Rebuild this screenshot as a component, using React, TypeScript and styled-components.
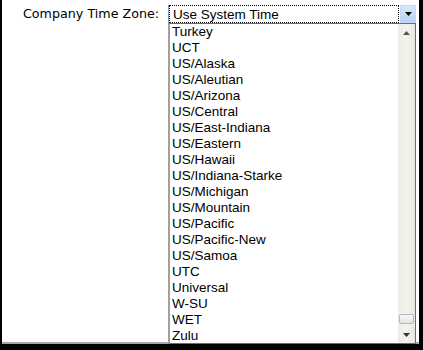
import React from "react";
import styled, { createGlobalStyle } from "styled-components";

const zones = [
  "Turkey",
  "UCT",
  "US/Alaska",
  "US/Aleutian",
  "US/Arizona",
  "US/Central",
  "US/East-Indiana",
  "US/Eastern",
  "US/Hawaii",
  "US/Indiana-Starke",
  "US/Michigan",
  "US/Mountain",
  "US/Pacific",
  "US/Pacific-New",
  "US/Samoa",
  "UTC",
  "Universal",
  "W-SU",
  "WET",
  "Zulu",
];

function App() {
  return (
    <>
      <GlobalStyle />
      <Frame>
        <Panel>
          <Label>Company Time Zone:</Label>
          <SelectColumn>
            <SelectBox>
              <SelectValue>Use System Time</SelectValue>
              <DropButton>
                <svg width="7" height="4" viewBox="0 0 7 4">
                  <path d="M0 0h7L3.5 4z" fill="#000" />
                </svg>
              </DropButton>
            </SelectBox>
            <List>
              <Options>
                {zones.map((z) => (
                  <Option key={z}>{z}</Option>
                ))}
              </Options>
              <ScrollBar>
                <ArrowButton>
                  <svg width="7" height="4" viewBox="0 0 7 4">
                    <path d="M0 4h7L3.5 0z" fill="#555" />
                  </svg>
                </ArrowButton>
                <Track>
                  <Thumb />
                </Track>
                <ArrowButton>
                  <svg width="7" height="4" viewBox="0 0 7 4">
                    <path d="M0 0h7L3.5 4z" fill="#333" />
                  </svg>
                </ArrowButton>
              </ScrollBar>
            </List>
          </SelectColumn>
        </Panel>
      </Frame>
    </>
  );
}

export default App;

const GlobalStyle = createGlobalStyle`
  html, body {
    margin: 0;
    padding: 0;
    background: #000;
  }
`;

const Frame = styled.div`
  width: 423px;
  height: 350px;
  box-sizing: border-box;
  background: #000;
  padding: 0 4px 6px 2px;
`;

const Panel = styled.div`
  height: 100%;
  box-sizing: border-box;
  background: #fff;
  border-bottom: 2px solid #a8a8a8;
  display: flex;
  align-items: flex-start;
  padding-top: 5px;
`;

const Label = styled.div`
  width: 166px;
  box-sizing: border-box;
  padding-left: 21px;
  font-family: "DejaVu Sans", Verdana, sans-serif;
  font-size: 12.7px;
  line-height: 18px;
  color: #000;
`;

const SelectColumn = styled.div`
  width: 248px;
  display: flex;
  flex-direction: column;
`;

const SelectBox = styled.div`
  height: 18px;
  display: flex;
  align-items: stretch;
  background: #fff;
  border-left: 1px solid #7f9db9;
`;

const SelectValue = styled.div`
  flex: 1;
  border: 1px dotted #000;
  padding-left: 3px;
  font-family: "Liberation Sans", Arial, sans-serif;
  font-size: 13.5px;
  line-height: 17px;
  color: #000;
`;

const DropButton = styled.div`
  width: 16px;
  margin-left: 1px;
  display: flex;
  align-items: center;
  justify-content: center;
  background: linear-gradient(#d8e8fb, #b8d0f3);
  border: 1px solid #c5d8f5;
  box-sizing: border-box;
`;

const List = styled.div`
  height: 321px;
  box-sizing: border-box;
  border: 1px solid #6c6c6c;
  border-left: 2px solid #a0a0a0;
  display: flex;
  background: #fff;
`;

const Options = styled.div`
  flex: 1;
  overflow: hidden;
`;

const Option = styled.div`
  height: 16px;
  padding-left: 2px;
  font-family: "Liberation Sans", Arial, sans-serif;
  font-size: 13.5px;
  line-height: 16px;
  color: #000;
  white-space: nowrap;
`;

const ScrollBar = styled.div`
  width: 17px;
  display: flex;
  flex-direction: column;
  background: linear-gradient(90deg, #eeede5, #f3f3ee 50%, #e8e8e0);
`;

const ArrowButton = styled.div`
  height: 17px;
  display: flex;
  align-items: center;
  justify-content: center;
`;

const Track = styled.div`
  flex: 1;
  display: flex;
  flex-direction: column;
  justify-content: flex-end;
  padding: 0 1px 2px;
`;

const Thumb = styled.div`
  height: 8px;
  border: 1px solid #b8b8b8;
  border-radius: 2px;
  background: linear-gradient(#f8f8f8, #e2e2e2);
`;
